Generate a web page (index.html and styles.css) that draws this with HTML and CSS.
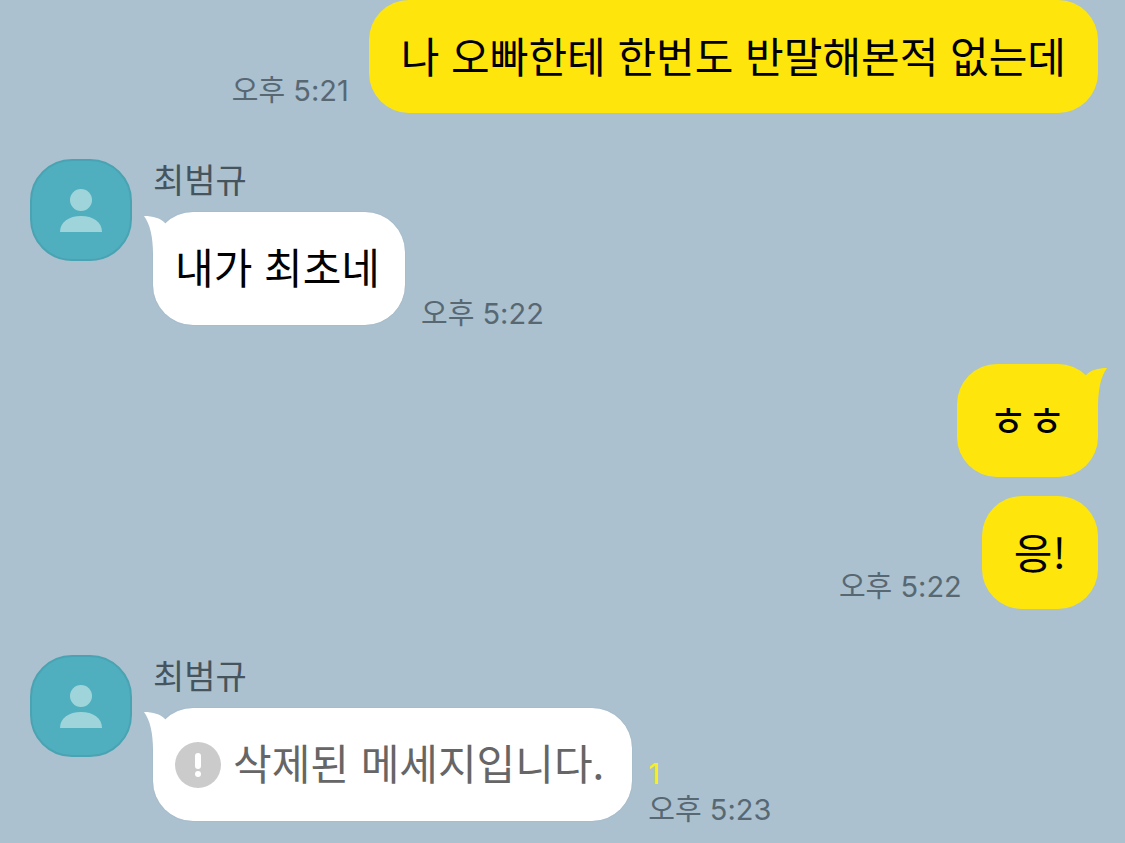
FILE: index.html
```html
<!DOCTYPE html>
<html lang="ko">
    <head>
        <meta charset="utf-8">
        <meta name="viewport" content="width=device-width, initial-scale=1">
        <title>최범규</title>
        <link rel="stylesheet" href="styles.css">
    </head>
    <body>
        <!-- shared icons -->
        <svg class="sprite" aria-hidden="true">
            <symbol id="person" viewBox="0 0 42 43">
                <circle cx="21" cy="11" r="11"/>
                <path d="M0 43C0 33 9 27 21 27s21 6 21 16z"/>
            </symbol>
            <symbol id="tail" viewBox="0 0 28 40">
                <path d="M1 1C10 1 17 3 22 8L28 40H10C10 22 7 9 1 1z"/>
            </symbol>
        </svg>

        <main class="chat">
            <div class="message mine">
                <time class="time">오후 5:21</time>
                <p class="bubble">나 오빠한테 한번도 반말해본적 없는데</p>
            </div>

            <div class="message theirs">
                <div class="avatar"><svg><use href="#person"/></svg></div>
                <div class="content">
                    <h2 class="name">최범규</h2>
                    <div class="line">
                        <p class="bubble"><svg class="tail"><use href="#tail"/></svg>내가 최초네</p>
                        <time class="time">오후 5:22</time>
                    </div>
                </div>
            </div>

            <div class="message mine first">
                <p class="bubble"><svg class="tail"><use href="#tail"/></svg>ㅎㅎ</p>
            </div>
            <div class="message mine next">
                <time class="time">오후 5:22</time>
                <p class="bubble">응!</p>
            </div>

            <div class="message theirs">
                <div class="avatar"><svg><use href="#person"/></svg></div>
                <div class="content">
                    <h2 class="name">최범규</h2>
                    <div class="line">
                        <p class="bubble deleted">
                            <svg class="tail"><use href="#tail"/></svg>
                            <svg class="alert" viewBox="0 0 46 46">
                                <circle cx="23" cy="23" r="23" fill="#cbcbcb"/>
                                <path d="M20 14a3 3 0 0 1 6 0v10a3 3 0 0 1-6 0z" fill="#fff"/>
                                <circle cx="23" cy="32" r="3" fill="#fff"/>
                            </svg>
                            <span>삭제된 메세지입니다.</span>
                        </p>
                        <div class="status">
                            <span class="unread">1</span>
                            <time class="time">오후 5:23</time>
                        </div>
                    </div>
                </div>
            </div>
        </main>
    </body>
</html>
```
FILE: styles.css
```css
*{
    box-sizing:border-box;
}
body{
    margin:0px;
    background:#abc1cf;
    font-family:"Noto Sans CJK KR", sans-serif;
}
p, h2{
    margin:0px;
}
.sprite{
    display:none;
}
.chat{
    padding:0px 27px 22px 30px;
}
.message{
    display:flex;
}
.mine{
    justify-content:flex-end;
    align-items:flex-end;
    gap:20px;
}
.first{
    margin-top:39px;
}
.next{
    margin-top:19px;
}
.theirs{
    gap:21px;
    margin-top:46px;
}
.avatar{
    display:flex;
    align-items:center;
    justify-content:center;
    flex:none;
    width:102px;
    height:102px;
    border:2px solid #4aa3b2;
    border-radius:42px;
    background:#4fafbe;
}
.avatar svg{
    width:42px;
    height:43px;
    fill:#9fd5da;
}
.name{
    margin-bottom:14px;
    color:#46545e;
    font-size:34px;
    font-weight:400;
    line-height:39px;
}
.line{
    display:flex;
    align-items:flex-end;
    gap:16px;
}
.bubble{
    position:relative;
    padding:28px 32px 32px;
    border-radius:40px;
    font-size:42px;
    line-height:53px;
}
.mine .bubble{
    background:#fee60c;
}
.theirs .bubble{
    padding:27px 25px 33px 22px;
    background:#fff;
    box-shadow:0px 0px 1px rgba(60,90,120,0.3);
}
.tail{
    position:absolute;
    top:3px;
    left:-10px;
    width:28px;
    height:40px;
    fill:#fff;
}
.mine .tail{
    left:auto;
    right:-10px;
    fill:#fee60c;
    transform:scaleX(-1);
}
.deleted{
    display:flex;
    align-items:center;
    gap:12px;
    color:#666;
}
.theirs .deleted{
    padding:30px 28px 30px 22px;
}
.deleted span{
    padding-bottom:6px;
    line-height:47px;
}
.alert{
    flex:none;
    width:46px;
    height:46px;
}
.time, .unread{
    display:block;
    color:#586873;
    font-family:Inter, "Noto Sans CJK KR", sans-serif;
    font-size:29px;
    line-height:36px;
    white-space:nowrap;
}
.mine .time{
    margin-bottom:4px;
}
.theirs .time{
    margin-bottom:-7px;
}
.theirs .unread{
    color:#f9ec2b;
}
```
